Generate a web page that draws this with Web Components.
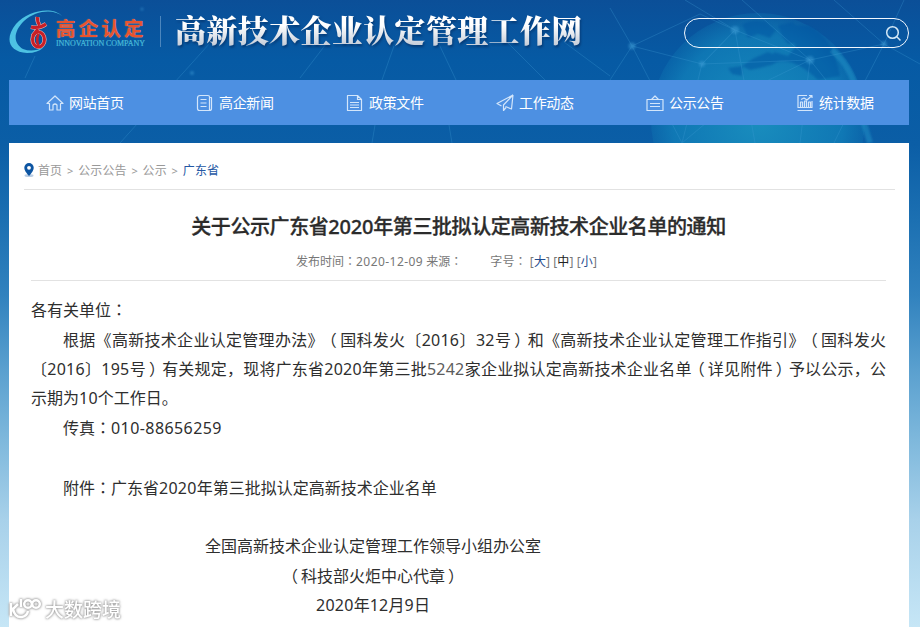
<!DOCTYPE html>
<html lang="zh-CN">
<head>
<meta charset="utf-8">
<title>高新技术企业认定管理工作网</title>
<style>
html,body{margin:0;height:100%;overflow:hidden}
body{font-family:"Noto Sans","Noto Sans CJK SC",sans-serif;color:#2e2e2e;text-spacing-trim:space-all}
</style>
</head>
<body>
<site-page>
  <site-header slot="head"></site-header>
  <main-nav slot="nav">
    <nav-item icon="home">网站首页</nav-item>
    <nav-item icon="news">高企新闻</nav-item>
    <nav-item icon="file">政策文件</nav-item>
    <nav-item icon="plane">工作动态</nav-item>
    <nav-item icon="board">公示公告</nav-item>
    <nav-item icon="chart">统计数据</nav-item>
  </main-nav>
  <crumb-trail></crumb-trail>
  <notice-head></notice-head>
  <notice-body>
    <text-line>各有关单位<cn-mark lang="zh-TW">：</cn-mark></text-line>
    <text-line indent fill>根据《高新技术企业认定管理办法》<cn-mark open>（</cn-mark>国科发火〔<num-run>2016</num-run>〕<num-run>32</num-run>号<cn-mark close>）</cn-mark>和《高新技术企业认定管理工作指引》<cn-mark open>（</cn-mark>国科发火</text-line>
    <text-line fill>〔<num-run>2016</num-run>〕<num-run>195</num-run>号<cn-mark close>）</cn-mark>有关规定，现将广东省<num-run>2020</num-run>年第三批<num-run style="color:#5c5c5c">5242</num-run>家企业拟认定高新技术企业名单<cn-mark open>（</cn-mark>详见附件<cn-mark close>）</cn-mark>予以公示，公</text-line>
    <text-line>示期为<num-run>10</num-run>个工作日。</text-line>
    <text-line indent>传真<cn-mark lang="zh-TW">：</cn-mark><num-run style="letter-spacing:.42px">010-88656259</num-run></text-line>
    <text-line></text-line>
    <text-line indent>附件<cn-mark lang="zh-TW">：</cn-mark>广东省<num-run>2020</num-run>年第三批拟认定高新技术企业名单</text-line>
    <text-line></text-line>
    <text-line sign>全国高新技术企业认定管理工作领导小组办公室</text-line>
    <text-line sign><cn-mark open>（</cn-mark>科技部火炬中心代章<cn-mark close>）</cn-mark></text-line>
    <text-line sign><num-run>2020</num-run>年<num-run>12</num-run>月<num-run>9</num-run>日</text-line>
  </notice-body>
  <water-mark slot="mark"></water-mark>
</site-page>
<script>
function define(name, html, setup) {
  const t = document.createElement('template');
  t.innerHTML = html;
  customElements.define(name, class extends HTMLElement {
    constructor() {
      super();
      this.attachShadow({mode: 'open'}).append(t.content.cloneNode(true));
    }
    connectedCallback() { if (setup) setup(this, this.shadowRoot); }
  });
}

define('num-run', `<style>:host{display:inline;letter-spacing:.016em}</style><slot></slot>`);
// Brackets use half-width forms with margins, so that the glyph sits nearer the middle of its cell.
define('cn-mark', `<style>:host{display:inline;font-family:"Noto Sans CJK TC",sans-serif}
:host([open]),:host([close]){font-feature-settings:"halt"}
:host([open]){margin:0 3px 0 5px}:host([close]){margin:0 5px 0 3px}</style><slot></slot>`);

define('site-page', `<style>
:host{display:block;position:relative;height:627px;overflow:hidden;
 background:linear-gradient(#0b4f98 0,#065aa4 60px,#0b5ea6 145px,#1c70b2 220px,#3182be 295px,#5aa0cf 370px,#7eb8dc 440px,#a8d1ea 520px,#c6e6f6 627px)}
main{margin:18px 11px 0 9px;height:484px;background:#fff}
</style>
<globe-art></globe-art><slot name="head"></slot><slot name="nav"></slot><main><slot></slot></main><slot name="mark"></slot>`);

define('globe-art', `<style>:host{position:absolute;left:0;top:0;width:920px;height:143px}svg{display:block}</style>
<svg width="920" height="143" viewBox="0 0 920 143" fill="none">
<defs><radialGradient id="g"><stop offset="0" stop-color="#1c96c2" stop-opacity=".85"/><stop offset=".8" stop-color="#1283bb" stop-opacity=".7"/><stop offset="1" stop-color="#1180b8" stop-opacity=".25"/></radialGradient>
<filter id="s"><feGaussianBlur stdDeviation=".8"/></filter></defs>
<circle cx="758" cy="120" r="107" fill="url(#g)"/>
<g filter="url(#s)">
<path d="M742 24q12-6 24-2l10 8-6 8-12-4-10 4zM778 26l14-4 12 10-6 10-10 2-6-8zM742 66l12-8 14-6 10 4-4 8-14 4-10 2zM728 68l14-2v10l-10-2zM780 24l30 2q24 14 30 50l-22 4q-30-28-48-14l4-14 14 4 8-10-8-12z" fill="#0a58a2" opacity=".55"/>
<path d="M832 50q24 20 28 60l10 33" stroke="#2a9fd0" stroke-width="6" opacity=".4"/>
</g>
<g stroke="#3f9bd3" stroke-width="1" opacity=".3">
<path d="M610 8l22 38 70 18 33-34-50-30M632 46l68-32 35 16 75 30 74-16-50-44M632 46l-22 34M702 64l-20 79 60-50 68-33 40 50 34-66M735 30l-33 34M810 60l-68-60M850 110l-16 33M884 44l36 20M632 46l50 97M810 60l-10 83M884 44l20-44M735 30l20 113M702 64l108-4"/>
<path d="M25 78l10-22M300 78l26-34M382 80l12-34M456 80l-18-38M545 80l-38-38M610 76l-46-34M120 143l90-100M372 143l10-60M452 143l-10-60"/>
</g>
<g fill="#45a4dc" opacity=".45" filter="url(#s)"><circle cx="632" cy="46" r="3.500"/><circle cx="735" cy="30" r="4"/><circle cx="810" cy="60" r="4"/><circle cx="884" cy="44" r="3"/><circle cx="702" cy="64" r="3"/><circle cx="192" cy="73" r="2"/><circle cx="142" cy="9" r="1.5"/></g>
</svg>`);

define('site-header', `<style>
:host{display:flex;position:relative;height:80px;box-sizing:border-box;padding:9px 11px 0 9px;align-items:flex-start}
svg{display:block;flex:none}
.name{width:91px;margin-left:-7px;padding-top:7px}
.cn{font:700 19.500px/23px "Noto Sans CJK SC",sans-serif;letter-spacing:3.200px;white-space:nowrap;color:#e8532f;text-shadow:0 0 1px #f6a58c}
.en{font:400 8px/8px "Liberation Serif",serif;color:#49bbd9;white-space:nowrap;letter-spacing:-.06px;margin-top:1px;-webkit-text-stroke:.2px #49bbd9}
.rule{width:1px;height:31px;background:#4c86bd;margin:7px 0 0 13px}
h1{margin:0 0 0 14px;padding-bottom:6px;font:900 31px/40px "Noto Serif CJK SC","Noto Sans CJK SC",serif;letter-spacing:.36px;white-space:nowrap;
 background:linear-gradient(#fff 35%,#c4ccd8 80%);-webkit-background-clip:text;color:transparent;filter:drop-shadow(1px 2px 1px #053a75)}
search-box{margin:9px 0 0 auto}
</style>
<svg width="54" height="46" viewBox="0 0 54 46"><path d="M53 7C44-3 19 1 7 15C-5 30 0 43 18 44Q29 44 35 38Q24 44 14 40C4 34 4 23 15 12C27 1 45 0 53 7Z" fill="#4dc2e3"/>
<g fill="none" stroke="#f1b3ae" stroke-width="4.200"><path d="M28.500 8Q28 13 30.500 16M22 18Q30 20 37 15M29 20L23.500 27"/><ellipse cx="29.500" cy="30.500" rx="6" ry="7.500"/></g>
<g fill="none" stroke="#c91f27" stroke-width="3"><path d="M28.500 8Q28 13 30.500 16M22 18Q30 20 37 15M29 20L23.500 27"/><ellipse cx="29.500" cy="30.500" rx="6" ry="7.500"/><path d="M29.500 25Q27 31 29.500 37" stroke-width="2.500"/></g></svg>
<div class="name"><div class="cn">高企认定</div><div class="en">INNOVATION COMPANY</div></div>
<div class="rule"></div><h1>高新技术企业认定管理工作网</h1><search-box></search-box>`);

define('search-box', `<style>:host{display:flex;justify-content:flex-end;align-items:center;box-sizing:border-box;width:225px;height:30px;border:1px solid #f2f8ff;border-radius:15px;padding-right:6px}svg{display:block}</style>
<svg width="17" height="17" viewBox="0 0 17 17" fill="none" stroke="#d4e8f7" stroke-width="1.500"><circle cx="7.500" cy="7.500" r="5.800"/><path d="M11.800 11.800L15.500 15.500"/></svg>`);

define('main-nav', `<style>:host{display:flex;position:relative;height:45px;margin:0 11px 0 9px;background:#4d90e2}::slotted(nav-item){width:150px}</style><slot></slot>`);

const icons = {
  home: '<path d="M1 9.500L9 2l8 7.500h-2.500V16H11v-5q-2-2-4 0v5H3.500V9.500z"/>',
  news: '<path d="M4 1.500h8q1.500 0 1.500 1.500v13.500H3.500q-2 0-2-2V4q0-2.500 2.500-2.500zM13.500 3.500h2v11q0 2-2 2M4.500 5.500h6M4.500 9h6M4.500 12.500h6"/>',
  file: '<path d="M1.500 1.500h10l4 4v11h-14zM11.500 1.500v4h4M4 8.500h9M4 11h9M4 13.500h9"/>',
  plane: '<path d="M17 1L1 9.500l4.500 2.500M17 1L15.500 15l-6-2.500M17 1L7.500 11v5.500l2.500-3"/>',
  board: '<path d="M1 5.500h16v11H1zM5.500 5.500L9 2l3.500 3.500M4 9.500h10M4 12.500h10"/>',
  chart: '<path d="M11 1.500H2v12h14V7M1.500 16.500h15M4.500 13V8h2v5M8.500 13V7h2v6M12.500 13V8h2v5M5 5.500l3-1.500 3 2 5-4.500M13 1.500h3V4"/>'
};
define('nav-item', `<style>:host{display:flex;align-items:center;box-sizing:border-box;padding-left:37px;color:#fff;font-size:14px;letter-spacing:-.35px;white-space:nowrap}svg{flex:none;margin-right:5px}span{line-height:45px}</style>
<svg width="18" height="18" viewBox="0 0 18 18" fill="none" stroke="#d3e6fb" stroke-width="1.200" stroke-linejoin="round"></svg><span><slot></slot></span>`,
 (el, root) => { root.querySelector('svg').innerHTML = icons[el.getAttribute('icon')]; });

define('crumb-trail', `<style>:host{display:flex;align-items:center;height:47px;box-sizing:border-box;margin:0 14px 0 15px;padding-top:8px;border-bottom:1px solid #e2e2e2;font-size:12px;letter-spacing:.1px;color:#999;white-space:nowrap}
svg{margin-right:4px;flex:none}i{font-style:normal;width:16px;text-align:center;font-size:11px}b{font-weight:400;color:#2457a4}</style>
<svg width="10" height="14" viewBox="0 0 10 14"><ellipse cx="5" cy="12.500" rx="4.500" ry="1.500" fill="#b9cde4"/><path d="M5 13Q.3 8 .3 4.800a4.700 4.700 0 0 1 9.400 0Q9.700 8 5 13z" fill="#0d55a2"/><circle cx="5" cy="4.800" r="1.900" fill="#fff"/></svg>
<span>首页</span><i>&gt;</i><span>公示公告</span><i>&gt;</i><span>公示</span><i>&gt;</i><b>广东省</b>`);

define('notice-head', `<style>:host{display:block;height:91px;box-sizing:border-box;margin:0 23px 0 22px;border-bottom:1px solid #e2e2e2}
h2{margin:0;padding-top:19px;font-weight:500;font-size:20px;line-height:36px;letter-spacing:-.42px;text-align:center;white-space:nowrap;color:#2b2b2b;-webkit-text-stroke:.3px #2b2b2b}
h2 num-run{letter-spacing:-.2px}
p{display:flex;margin:6px 0 0 265px;font-size:12px;line-height:20px;color:#777;white-space:pre}
p num-run{letter-spacing:.45px}
.size{margin-left:28px;letter-spacing:.1px}.size b{font-weight:400;color:#1f4b8f}.size b.on{color:#222}</style>
<h2>关于公示广东省<num-run>2020</num-run>年第三批拟认定高新技术企业名单的通知</h2>
<p><span>发布时间<cn-mark lang="zh-TW">：</cn-mark><num-run>2020-12-09</num-run> 来源<cn-mark lang="zh-TW">：</cn-mark></span><span class="size">字号<cn-mark lang="zh-TW">：</cn-mark> [<b>大</b>] [<b class="on">中</b>] [<b>小</b>]</span></p>`);

define('notice-body', `<style>:host{display:block;margin:14px 23px 0 22px;font-size:16px;line-height:29.600px}</style><slot></slot>`);
define('text-line', `<style>:host{display:block;height:29.600px;white-space:nowrap}:host([indent]){padding-left:32px}
:host([fill]){white-space:normal;text-align:justify;text-align-last:justify}
:host([sign]){width:684px;text-align:center}</style><slot></slot>`);

define('water-mark', `<style>:host{position:absolute;left:8px;top:595px;display:flex;align-items:center;filter:drop-shadow(0 0 1px #999) drop-shadow(0 0 1px #bbb);color:#fff}
svg{display:block}span{font:500 19px/28px "Noto Sans CJK SC",sans-serif;margin-left:3px}</style>
<svg width="34" height="28" viewBox="0 0 34 28" fill="none" stroke="#fff" stroke-width="2.500"><path d="M3 8v13M3 16l7-7M5 14q2 9 9 8 5-1 6-6M13 4v8" /><circle cx="20" cy="9" r="3.800"/><circle cx="28" cy="9" r="3.800"/></svg><span>大数跨境</span>`);
</script>
</body>
</html>
